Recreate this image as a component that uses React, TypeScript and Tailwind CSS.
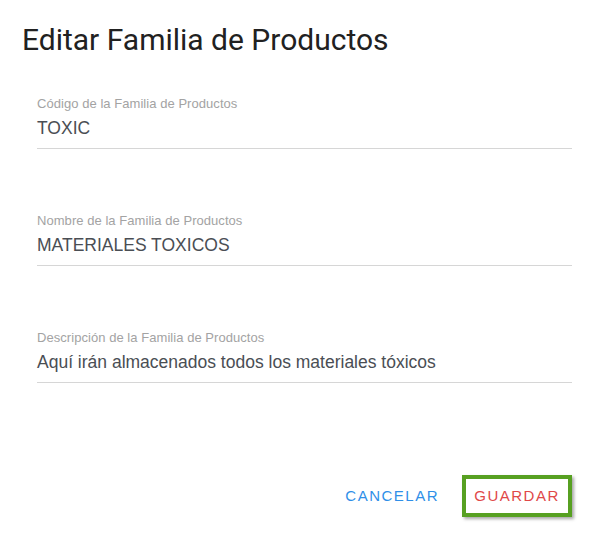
import React from 'react';

const fields = [
  { label: 'Código de la Familia de Productos', value: 'TOXIC' },
  { label: 'Nombre de la Familia de Productos', value: 'MATERIALES TOXICOS' },
  { label: 'Descripción de la Familia de Productos', value: 'Aquí irán almacenados todos los materiales tóxicos' },
];

const App: React.FC = () => {
  return (
    <div className="w-[612px] h-[536px] bg-white flex flex-col">
      <h2 className="pl-[22px] pt-[22px] text-[30px] leading-[36px] text-[#212121] font-['Roboto',sans-serif]">
        Editar Familia de Productos
      </h2>

      <div className="flex flex-col pl-[37px] pr-[40px] pt-[38px] gap-[64px]">
        {fields.map(f => (
          <div key={f.label} className="flex flex-col border-b border-[#d6d6d6] pb-[10px]">
            <label className="text-[13px] leading-[15px] text-[#a3a3a3] font-['Liberation_Sans',Arial,sans-serif] tracking-[0.05px]">
              {f.label}
            </label>
            <div className="mt-[7px] text-[17.5px] leading-[20px] text-[#4a4e54] font-['Liberation_Sans',Arial,sans-serif]">
              {f.value}
            </div>
          </div>
        ))}
      </div>

      <div className="flex justify-end items-center gap-[23px] pr-[40px] mt-auto mb-[19px]">
        <button className="text-[15px] tracking-[1.5px] text-[#2f8fe8] font-['Liberation_Sans',Arial,sans-serif]">
          CANCELAR
        </button>
        <button className="w-[110px] h-[42px] flex items-center justify-center border-[4px] border-[#57a021] shadow-[2px_2px_3px_rgba(0,0,0,0.35)] text-[15px] tracking-[1.5px] text-[#e04848] font-['Liberation_Sans',Arial,sans-serif]">
          GUARDAR
        </button>
      </div>
    </div>
  );
};

export default App;
